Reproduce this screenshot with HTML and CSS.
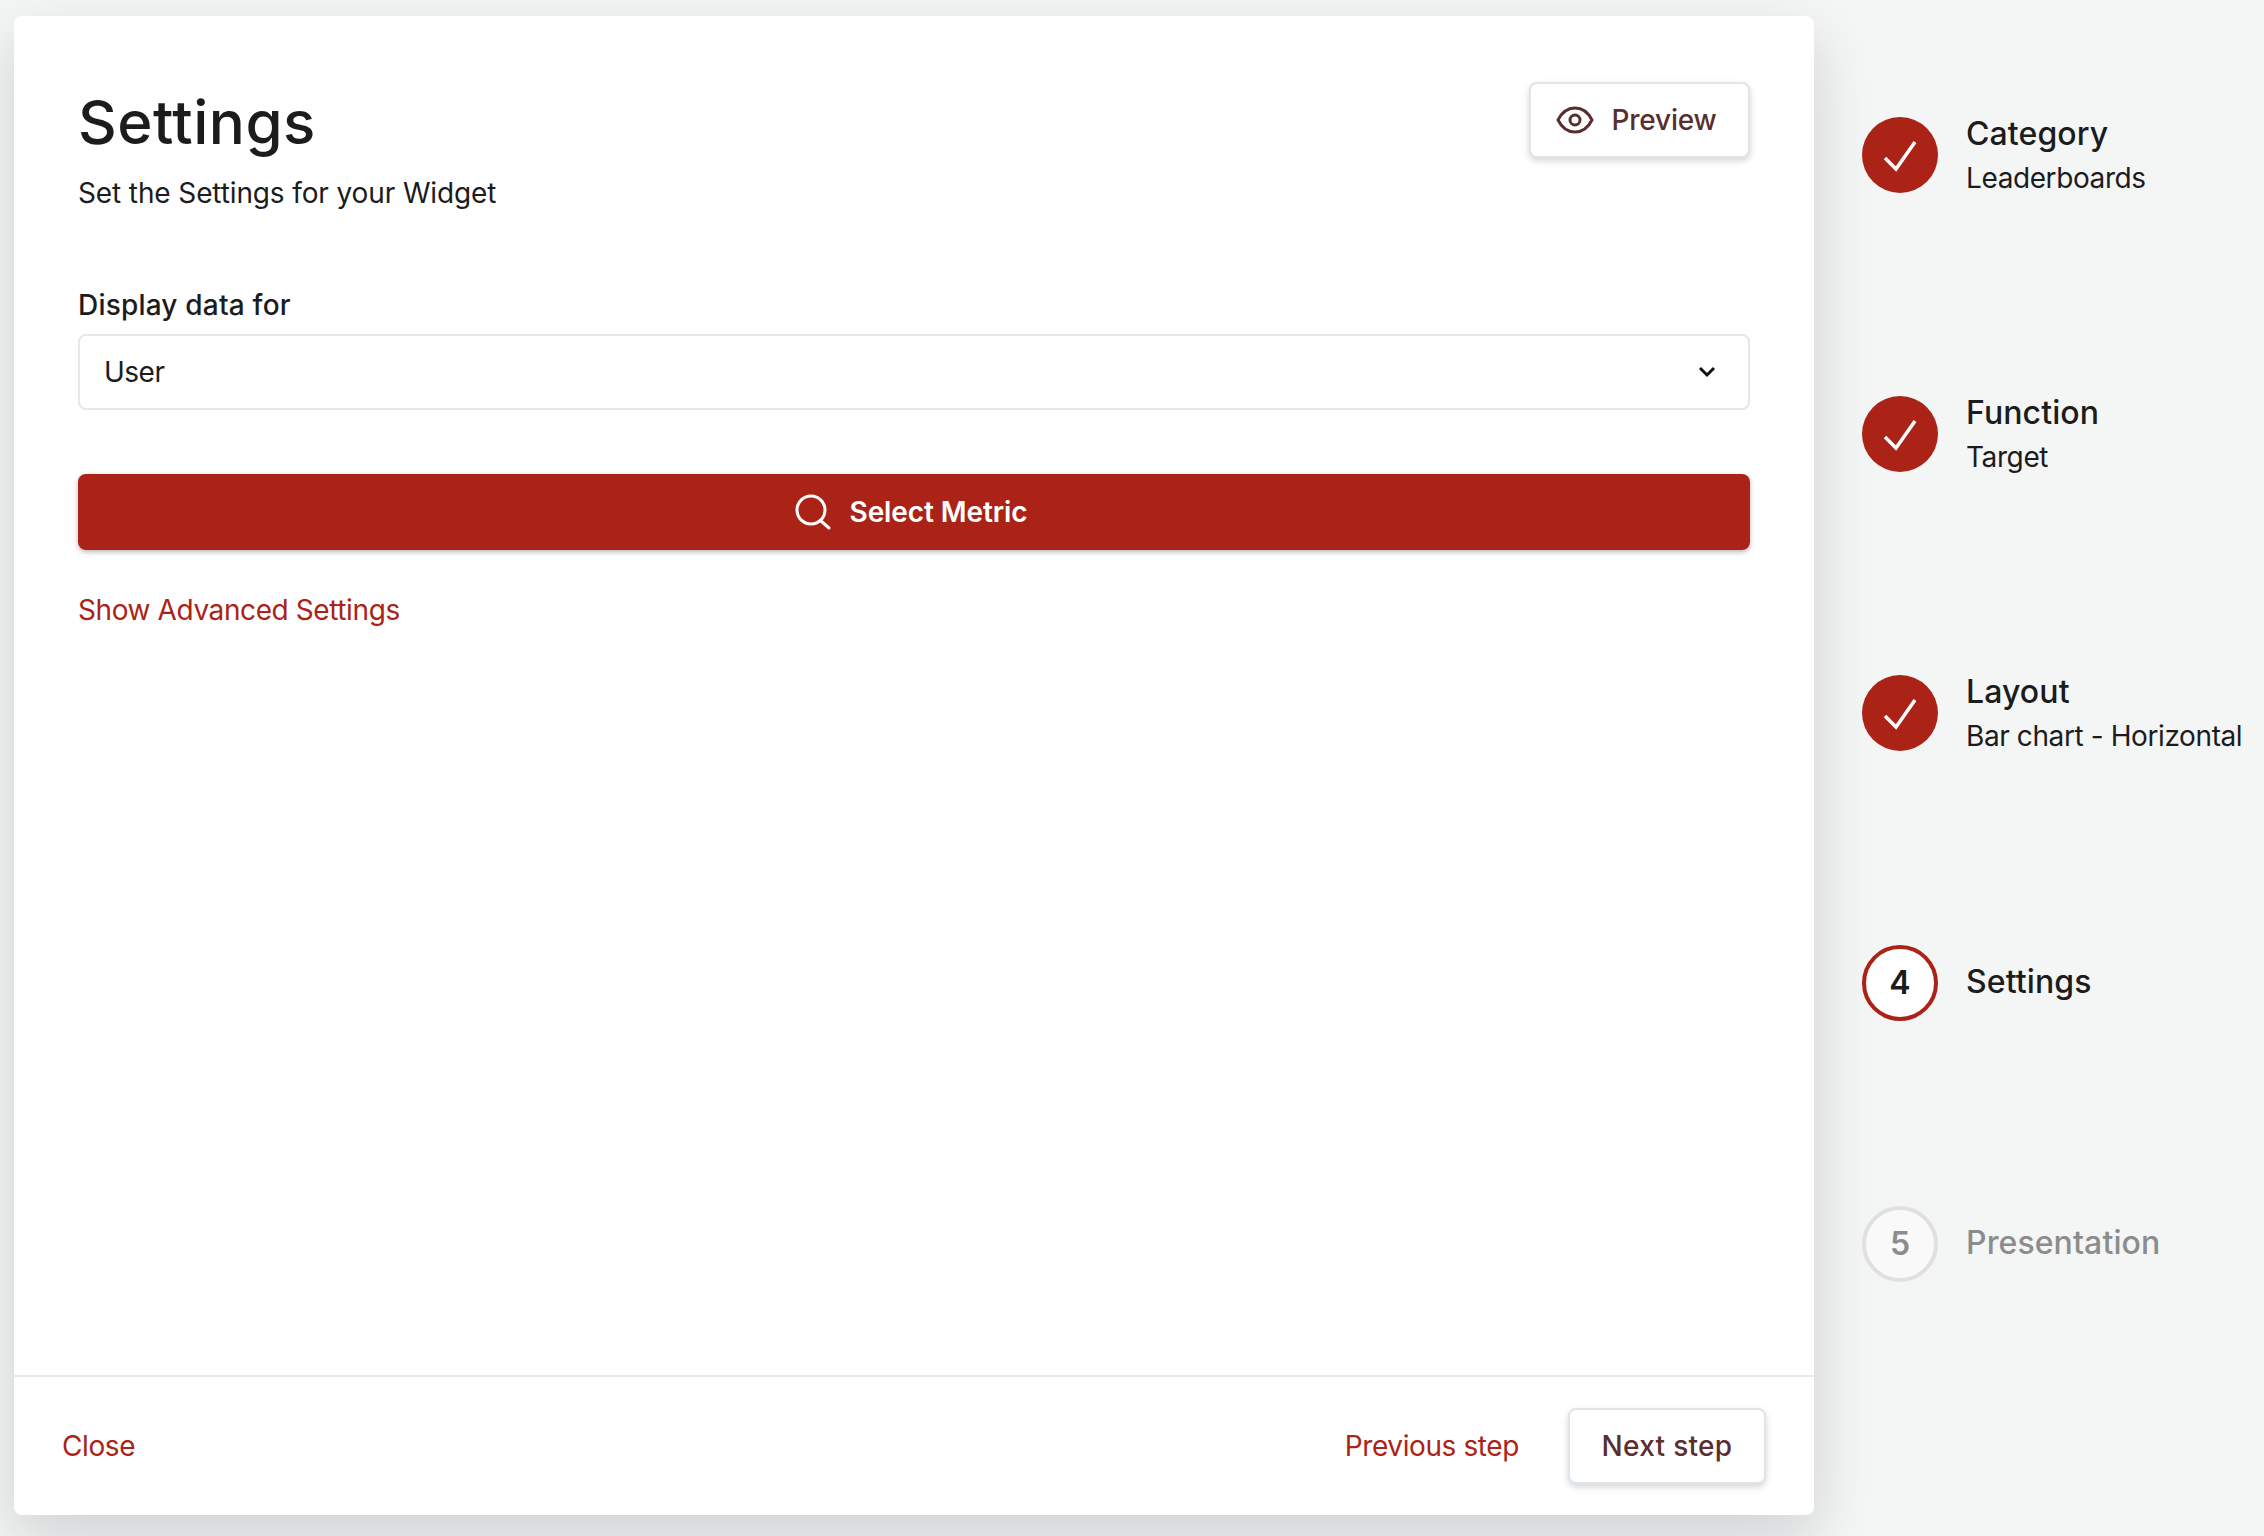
FILE: index.html
```html
<!DOCTYPE html>
<html lang="en">
<head>
<meta charset="utf-8">
<title>Settings</title>
<link rel="stylesheet" href="styles.css">
</head>
<body>
<div class="page">
  <main class="card">
    <div class="content">
      <header class="head">
        <div class="head-text">
          <h1 class="title">Settings</h1>
          <p class="subtitle">Set the Settings for your Widget</p>
        </div>
        <button class="btn btn-preview" type="button">
          <svg class="eye" width="38" height="28" viewBox="0 0 38 28" fill="none" stroke="#5a2e2e" stroke-width="3"><path d="M2 14C6 6 12 2 19 2s13 4 17 12c-4 8-10 12-17 12S6 22 2 14z" stroke-linejoin="round"/><circle cx="19" cy="14" r="5"/></svg>
          <span>Preview</span>
        </button>
      </header>
      <label class="label">Display data for</label>
      <div class="select">
        <span>User</span>
        <svg width="18" height="12" viewBox="0 0 18 12" fill="none" stroke="#111" stroke-width="3"><path d="M2 2l7 7 7-7"/></svg>
      </div>
      <button class="btn-primary" type="button">
        <svg width="36" height="36" viewBox="0 0 36 36" fill="none" stroke="#fff" stroke-width="3" stroke-linecap="round"><circle cx="16" cy="16" r="14"/><path d="M26 27l8 7"/></svg>
        <span>Select Metric</span>
      </button>
      <a class="link advanced">Show Advanced Settings</a>
    </div>
    <footer class="footer">
      <a class="link">Close</a>
      <div class="footer-right">
        <a class="link">Previous step</a>
        <button class="btn btn-next" type="button">Next step</button>
      </div>
    </footer>
  </main>
  <aside class="steps">
    <div class="step">
      <div class="dot dot-done"><svg width="76" height="76" viewBox="0 0 76 76" fill="none" stroke="#fff" stroke-width="3.5"><path d="M23 41l11 11 19-27"/></svg></div>
      <div class="step-text"><div class="step-title">Category</div><div class="step-sub">Leaderboards</div></div>
    </div>
    <div class="step">
      <div class="dot dot-done"><svg width="76" height="76" viewBox="0 0 76 76" fill="none" stroke="#fff" stroke-width="3.5"><path d="M23 41l11 11 19-27"/></svg></div>
      <div class="step-text"><div class="step-title">Function</div><div class="step-sub">Target</div></div>
    </div>
    <div class="step">
      <div class="dot dot-done"><svg width="76" height="76" viewBox="0 0 76 76" fill="none" stroke="#fff" stroke-width="3.5"><path d="M23 41l11 11 19-27"/></svg></div>
      <div class="step-text"><div class="step-title">Layout</div><div class="step-sub">Bar chart - Horizontal</div></div>
    </div>
    <div class="step step-plain">
      <div class="dot dot-current">4</div>
      <div class="step-text"><div class="step-title">Settings</div></div>
    </div>
    <div class="step step-plain step-todo">
      <div class="dot dot-todo">5</div>
      <div class="step-text"><div class="step-title">Presentation</div></div>
    </div>
  </aside>
</div>
</body>
</html>
```

FILE: styles.css
```css
* { box-sizing: border-box; }
html, body { margin: 0; height: 100%; overflow: hidden; }
body { background: #f4f5f5; color: #1c1c1c; font-family: "Inter", "Liberation Sans", sans-serif; font-size: 28px; }
.page { display: flex; height: 1536px; padding: 16px 0 21px 14px; }
.card { width: 1800px; background: #fff; border-radius: 8px; display: flex; flex-direction: column; box-shadow: 0 24px 60px rgba(20, 30, 40, .16); }
.content { flex: 1; display: flex; flex-direction: column; align-items: flex-start; padding: 66px 64px 0; }
.head { width: 100%; display: flex; justify-content: space-between; align-items: flex-start; margin-bottom: 76px; }
.head-text { padding-top: 2px; }
.title { margin: 0; font-size: 60px; line-height: 76px; font-weight: 500; letter-spacing: .5px; }
.subtitle { margin: 15px 0 0; font-size: 28px; line-height: 36px; letter-spacing: -.12px; }
.btn { background: #fff; border: 2px solid #dfe5e8; border-radius: 8px; color: #5a2e2e; font: inherit; font-weight: 500; box-shadow: 0 3px 6px rgba(60, 70, 80, .22); display: flex; align-items: center; justify-content: center; padding: 0; }
.btn-preview { width: 221px; height: 76px; gap: 17px; letter-spacing: -.2px; padding-right: 6px; }
.btn-next { width: 198px; height: 76px; letter-spacing: .3px; }
.label { font-weight: 500; line-height: 36px; letter-spacing: .2px; margin-bottom: 11px; }
.select { width: 100%; height: 76px; border: 2px solid #e3e8ea; border-radius: 8px; display: flex; align-items: center; justify-content: space-between; padding: 0 32px 0 24px; letter-spacing: -.5px; margin-bottom: 64px; }
.btn-primary { width: 100%; height: 76px; background: #ab2316; border: 0; border-radius: 8px; color: #fff; font: inherit; font-weight: 600; letter-spacing: -.1px; box-shadow: 0 2px 5px rgba(60, 40, 40, .35); display: flex; align-items: center; justify-content: center; gap: 19px; padding: 0 6px 0 0; margin-bottom: 42px; }
.link { color: #ab2316; letter-spacing: -.4px; line-height: 36px; }
.footer { height: 140px; border-top: 2px solid #e8eaeb; display: flex; align-items: center; justify-content: space-between; padding: 0 48px 1px; }
.footer-right { display: flex; align-items: center; gap: 49px; }
.steps { flex: 1; display: flex; flex-direction: column; gap: 185px; padding: 92px 0 0 48px; }
.step { display: flex; align-items: center; gap: 28px; }
.dot { width: 76px; height: 76px; flex: none; border-radius: 50%; display: flex; align-items: center; justify-content: center; padding-bottom: 2px; font-size: 32px; font-weight: 600; }
.dot-done { background: #ab2316; padding: 0; }
.dot-current { background: #fff; border: 4px solid #ab2316; }
.dot-todo { background: #f9f9f9; border: 4px solid #e0e0e0; color: #8c8c8c; }
.step-text { padding-bottom: 6px; }
.step-plain .step-text { padding-bottom: 2px; }
.step-title { font-size: 32px; line-height: 52px; font-weight: 500; letter-spacing: .1px; }
.step-sub { font-size: 28px; line-height: 36px; letter-spacing: -.4px; }
.step-todo .step-title { color: #8c8c8c; }
```
